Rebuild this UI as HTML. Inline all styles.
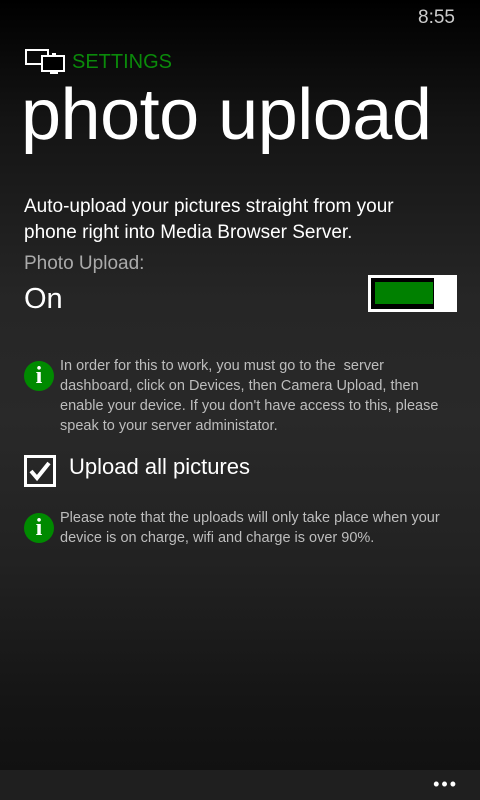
<!DOCTYPE html>
<html><head><meta charset="utf-8"><style>
html,body{margin:0;padding:0}
body{width:480px;height:800px;position:relative;overflow:hidden;font-family:"Liberation Sans",sans-serif;
background:linear-gradient(180deg,#000 0px,#141414 120px,#262626 300px,#292929 420px,#222 560px,#151515 700px,#111 770px);color:#fff}
.a{position:absolute;white-space:nowrap}
.info{position:absolute;width:30px;height:30px;border-radius:50%;background:#008a00;color:#fff;font:bold 24px "Liberation Serif",serif;text-align:center;line-height:31px}
.small{font-size:14.5px;color:#bdbdbd;line-height:20px;white-space:normal}
</style></head><body>
<div class="a" style="right:25px;top:7px;font-size:19px;color:#ccc">8:55</div>
<svg class="a" style="left:24px;top:48px" width="42" height="26" viewBox="0 0 42 26" fill="none" stroke="#fff" stroke-width="2">
<rect x="2" y="2" width="22" height="14"/><rect x="18" y="8" width="22" height="15" fill="#000"/><path d="M26 25h8"/><path d="M28 6h4"/>
</svg>
<div class="a" style="left:72px;top:51px;font-size:20px;color:#0a8a0a">SETTINGS</div>
<div class="a" style="left:21px;top:74px;font-size:72px;letter-spacing:-0.5px;color:#fff">photo upload</div>
<div class="a" style="left:24px;top:194px;font-size:19px;line-height:26px;white-space:normal;width:420px">Auto-upload your pictures straight from your phone right into Media Browser Server.</div>
<div class="a" style="left:24px;top:253px;font-size:19px;color:#aaa">Photo Upload:</div>
<div class="a" style="left:24px;top:283px;font-size:29px;color:#fff">On</div>
<div class="a" style="left:368px;top:275px;width:63px;height:31px;border:3px solid #fff;background:#000"></div>
<div class="a" style="left:375px;top:282px;width:58px;height:22px;background:#008000"></div>
<div class="a" style="left:437px;top:275px;width:20px;height:37px;background:#fff"></div>
<div class="info" style="left:24px;top:361px">i</div>
<div class="a small" style="left:60px;top:356px;width:400px">In order for this to work, you must go to the&nbsp; server dashboard, click on Devices, then Camera Upload, then enable your device. If you don't have access to this, please speak to your server administator.</div>
<div class="a" style="left:24px;top:455px;width:26px;height:26px;border:3px solid #fff"></div>
<svg class="a" style="left:27px;top:458px" width="26" height="26" viewBox="0 0 26 26"><path d="M4 13l6 7L22 5" fill="none" stroke="#fff" stroke-width="4"/></svg>
<div class="a" style="left:69px;top:454px;font-size:22px">Upload all pictures</div>
<div class="info" style="left:24px;top:513px">i</div>
<div class="a small" style="left:60px;top:508px;width:410px">Please note that the uploads will only take place when your device is on charge, wifi and charge is over 90%.</div>
<div class="a" style="left:0;top:770px;width:480px;height:30px;background:#1f1f1f"></div>
<div class="a" style="right:22px;top:774px;font-size:18px;letter-spacing:2px;color:#fff">•••</div>
</body></html>
